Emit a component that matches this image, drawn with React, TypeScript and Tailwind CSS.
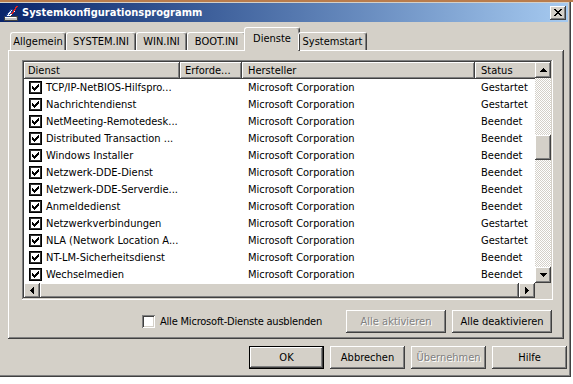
import React from "react";

const RAISED =
  "shadow-[inset_-1px_-1px_#404040,inset_1px_1px_#ffffff,inset_-2px_-2px_#808080,inset_2px_2px_#d4d0c8]";

const rows: [string, string][] = [
  ["TCP/IP-NetBIOS-Hilfspro...", "Gestartet"],
  ["Nachrichtendienst", "Gestartet"],
  ["NetMeeting-Remotedesk...", "Beendet"],
  ["Distributed Transaction ...", "Beendet"],
  ["Windows Installer", "Beendet"],
  ["Netzwerk-DDE-Dienst", "Beendet"],
  ["Netzwerk-DDE-Serverdie...", "Beendet"],
  ["Anmeldedienst", "Beendet"],
  ["Netzwerkverbindungen", "Gestartet"],
  ["NLA (Network Location A...", "Gestartet"],
  ["NT-LM-Sicherheitsdienst", "Beendet"],
  ["Wechselmedien", "Beendet"],
];

function Arrow({ dir }: { dir: "up" | "down" | "left" | "right" }) {
  const d =
    dir === "up"
      ? "M3 0H4V1H5V2H6V3H7V4H0V3H1V2H2V1H3Z"
      : dir === "down"
      ? "M0 0H7V1H6V2H5V3H4V4H3V3H2V2H1V1H0Z"
      : dir === "left"
      ? "M3 0H4V7H3V6H2V5H1V4H0V3H1V2H2V1H3Z"
      : "M0 0H1V1H2V2H3V3H4V4H3V5H2V6H1V7H0Z";
  const w = dir === "up" || dir === "down" ? 7 : 4;
  const h = dir === "up" || dir === "down" ? 4 : 7;
  return (
    <svg width={w} height={h} viewBox={`0 0 ${w} ${h}`} shapeRendering="crispEdges">
      <path d={d} fill="#000" />
    </svg>
  );
}

function ScrollBtn({ dir, w, h }: { dir: "up" | "down" | "left" | "right"; w: string; h: string }) {
  return (
    <div className={`${w} ${h} shrink-0 bg-[#d4d0c8] flex items-center justify-center ${RAISED}`}>
      <Arrow dir={dir} />
    </div>
  );
}

function ListCheck() {
  return (
    <div className="w-[13px] h-[13px] shrink-0 bg-white border border-black shadow-[inset_0_0_0_1px_#303030] flex items-center justify-center">
      <svg width="7" height="7" viewBox="0 0 7 7" shapeRendering="crispEdges">
        <path d="M0 2H1V3H2V4H3V3H4V2H5V1H6V0H7V3H6V4H5V5H4V6H3V7H2V6H1V5H0Z" fill="#000" />
      </svg>
    </div>
  );
}

function Btn({
  label,
  w,
  disabled,
  def,
}: {
  label: string;
  w: string;
  disabled?: boolean;
  def?: boolean;
}) {
  const inner = (
    <div
      className={`w-full h-full flex items-center justify-center bg-[#d4d0c8] ${RAISED} ${
        disabled ? "text-[#808080] [text-shadow:1px_1px_0_#ffffff]" : "text-black"
      }`}
    >
      {label}
    </div>
  );
  return def ? (
    <div className={`${w} h-[23px] border border-black`}>{inner}</div>
  ) : (
    <div className={`${w} h-[23px]`}>{inner}</div>
  );
}

function TitleIcon() {
  return (
    <svg width="16" height="16" viewBox="0 0 16 16" shapeRendering="crispEdges">
      <rect x="1" y="11" width="13" height="4" fill="#c0c0c0" stroke="#404040" strokeWidth="1" />
      <rect x="2" y="12" width="11" height="1" fill="#ffffff" />
      <path d="M3 11 L8 4 L10 5 L6 11 Z" fill="#e8f0ff" stroke="#1c3c8c" strokeWidth="1" />
      <path d="M7 11 L11 6" stroke="#ffffff" strokeWidth="1.5" />
      <path d="M9 9 L14 1" stroke="#e02020" strokeWidth="1.5" />
    </svg>
  );
}

export default function App() {
  const tabs = [
    { label: "Allgemein", w: "w-[56px]" },
    { label: "SYSTEM.INI", w: "w-[70px]" },
    { label: "WIN.INI", w: "w-[51px]" },
    { label: "BOOT.INI", w: "w-[59px]" },
    { label: "Dienste", w: "w-[50px]", sel: true },
    { label: "Systemstart", w: "w-[69px]" },
  ];

  return (
    <div className="w-[573px] h-[384px] bg-white overflow-hidden text-[11px] leading-none text-black font-['DejaVu_Sans_Condensed','Liberation_Sans',sans-serif]">
      <div className="h-[2px] bg-[#b97c4c]" />
      <div className="w-[571px] h-[375px] bg-[#d4d0c8] flex flex-col shadow-[inset_-1px_-1px_#404040,inset_-2px_-2px_#808080]">
        {/* Title bar */}
        <div className="mt-[1px] mr-[3px] h-[19px] flex items-center pl-[3px] pr-[2px] bg-linear-to-r from-[#0a246a] to-[#a6caf0]">
          <TitleIcon />
          <span className="ml-[3px] text-white font-bold text-[11px]">Systemkonfigurationsprogramm</span>
          <div className={`ml-auto w-[16px] h-[14px] bg-[#d4d0c8] flex items-center justify-center ${RAISED}`}>
            <svg width="8" height="7" viewBox="0 0 8 7" shapeRendering="crispEdges">
              <path
                d="M0 0H2V1H3V2H5V1H6V0H8V1H7V2H6V3H5V4H6V5H7V6H8V7H6V6H5V5H3V6H2V7H0V6H1V5H2V4H3V3H2V2H1V1H0Z"
                fill="#000"
              />
            </svg>
          </div>
        </div>

        {/* Tabs */}
        <div className="relative z-10 mt-[8px] ml-[8px] h-[20px] flex items-end pl-[2px]">
          {tabs.map((t) =>
            t.sel ? (
              <div
                key={t.label}
                className={`${t.w} -mx-[2px] -mb-[1px] h-[21px] box-content px-[2px] bg-[#d4d0c8] border-t border-l border-r border-t-white border-l-white border-r-[#404040] rounded-t-[3px] shadow-[inset_-1px_0_#808080] flex items-center justify-center pb-[2px]`}
              >
                {t.label}
              </div>
            ) : (
              <div
                key={t.label}
                className={`${t.w} h-[18px] border-t border-l border-r border-t-white border-l-white border-r-[#404040] rounded-t-[3px] shadow-[inset_-1px_0_#808080] flex items-center justify-center`}
              >
                {t.label}
              </div>
            )
          )}
        </div>

        {/* Panel */}
        <div className="ml-[8px] w-[556px] h-[289px] shadow-[inset_-1px_-1px_#404040,inset_1px_1px_#ffffff,inset_-2px_-2px_#808080] pt-[10px] pl-[14px] flex flex-col">
          {/* List view */}
          <div className="w-[531px] h-[240px] bg-white p-[2px] flex shadow-[inset_-1px_-1px_#ffffff,inset_1px_1px_#808080,inset_-2px_-2px_#d4d0c8,inset_2px_2px_#404040]">
            <div className="w-[511px] flex flex-col">
              <div className="h-[17px] flex overflow-hidden">
                <div className={`w-[156px] shrink-0 bg-[#d4d0c8] pl-[4px] flex items-center ${RAISED}`}>Dienst</div>
                <div className={`w-[62px] shrink-0 bg-[#d4d0c8] pl-[5px] flex items-center ${RAISED}`}>Erforde...</div>
                <div className={`w-[233px] shrink-0 bg-[#d4d0c8] pl-[6px] flex items-center ${RAISED}`}>Hersteller</div>
                <div className={`w-[80px] shrink-0 bg-[#d4d0c8] pl-[6px] flex items-center ${RAISED}`}>Status</div>
              </div>
              {rows.map(([name, status]) => (
                <div key={name} className="h-[17px] flex items-center whitespace-nowrap">
                  <div className="w-[156px] shrink-0 pl-[5px] flex items-center gap-[4px]">
                    <ListCheck />
                    <span>{name}</span>
                  </div>
                  <div className="w-[62px] shrink-0" />
                  <div className="w-[233px] shrink-0 pl-[6px]">Microsoft Corporation</div>
                  <div className="pl-[6px]">{status}</div>
                </div>
              ))}
              <div className="h-[15px] flex">
                <ScrollBtn dir="left" w="w-[16px]" h="h-[15px]" />
                <div className={`flex-1 bg-[#d4d0c8] ${RAISED}`} />
                <ScrollBtn dir="right" w="w-[16px]" h="h-[15px]" />
              </div>
            </div>
            <div className="w-[16px] flex flex-col">
              <ScrollBtn dir="up" w="w-[16px]" h="h-[16px]" />
              <div className="h-[189px] flex flex-col bg-[image:repeating-conic-gradient(#d4d0c8_0%_25%,#ffffff_0%_50%)] bg-[length:2px_2px]">
                <div className="h-[57px]" />
                <div className={`h-[25px] bg-[#d4d0c8] ${RAISED}`} />
              </div>
              <ScrollBtn dir="down" w="w-[16px]" h="h-[16px]" />
              <div className="h-[15px] bg-[#d4d0c8]" />
            </div>
          </div>

          {/* Controls below list */}
          <div className="mt-[10px] w-[531px] h-[23px] flex items-center justify-end pr-[1px]">
            <div className="flex items-center">
              <div className="w-[13px] h-[13px] bg-white shadow-[inset_1px_1px_#808080,inset_-1px_-1px_#ffffff,inset_2px_2px_#404040,inset_-2px_-2px_#d4d0c8]" />
              <span className="ml-[5px] tracking-[-0.2px]">Alle Microsoft-Dienste ausblenden</span>
            </div>
            <div className="ml-[24px]">
              <Btn label="Alle aktivieren" w="w-[100px]" disabled />
            </div>
            <div className="ml-[6px]">
              <Btn label="Alle deaktivieren" w="w-[100px]" />
            </div>
          </div>
        </div>

        {/* Bottom buttons */}
        <div className="mt-[7px] flex justify-end gap-[6px] pr-[4px]">
          <Btn label="OK" w="w-[75px]" def />
          <Btn label="Abbrechen" w="w-[75px]" />
          <Btn label="Übernehmen" w="w-[75px]" disabled />
          <Btn label="Hilfe" w="w-[75px]" />
        </div>
      </div>
    </div>
  );
}
